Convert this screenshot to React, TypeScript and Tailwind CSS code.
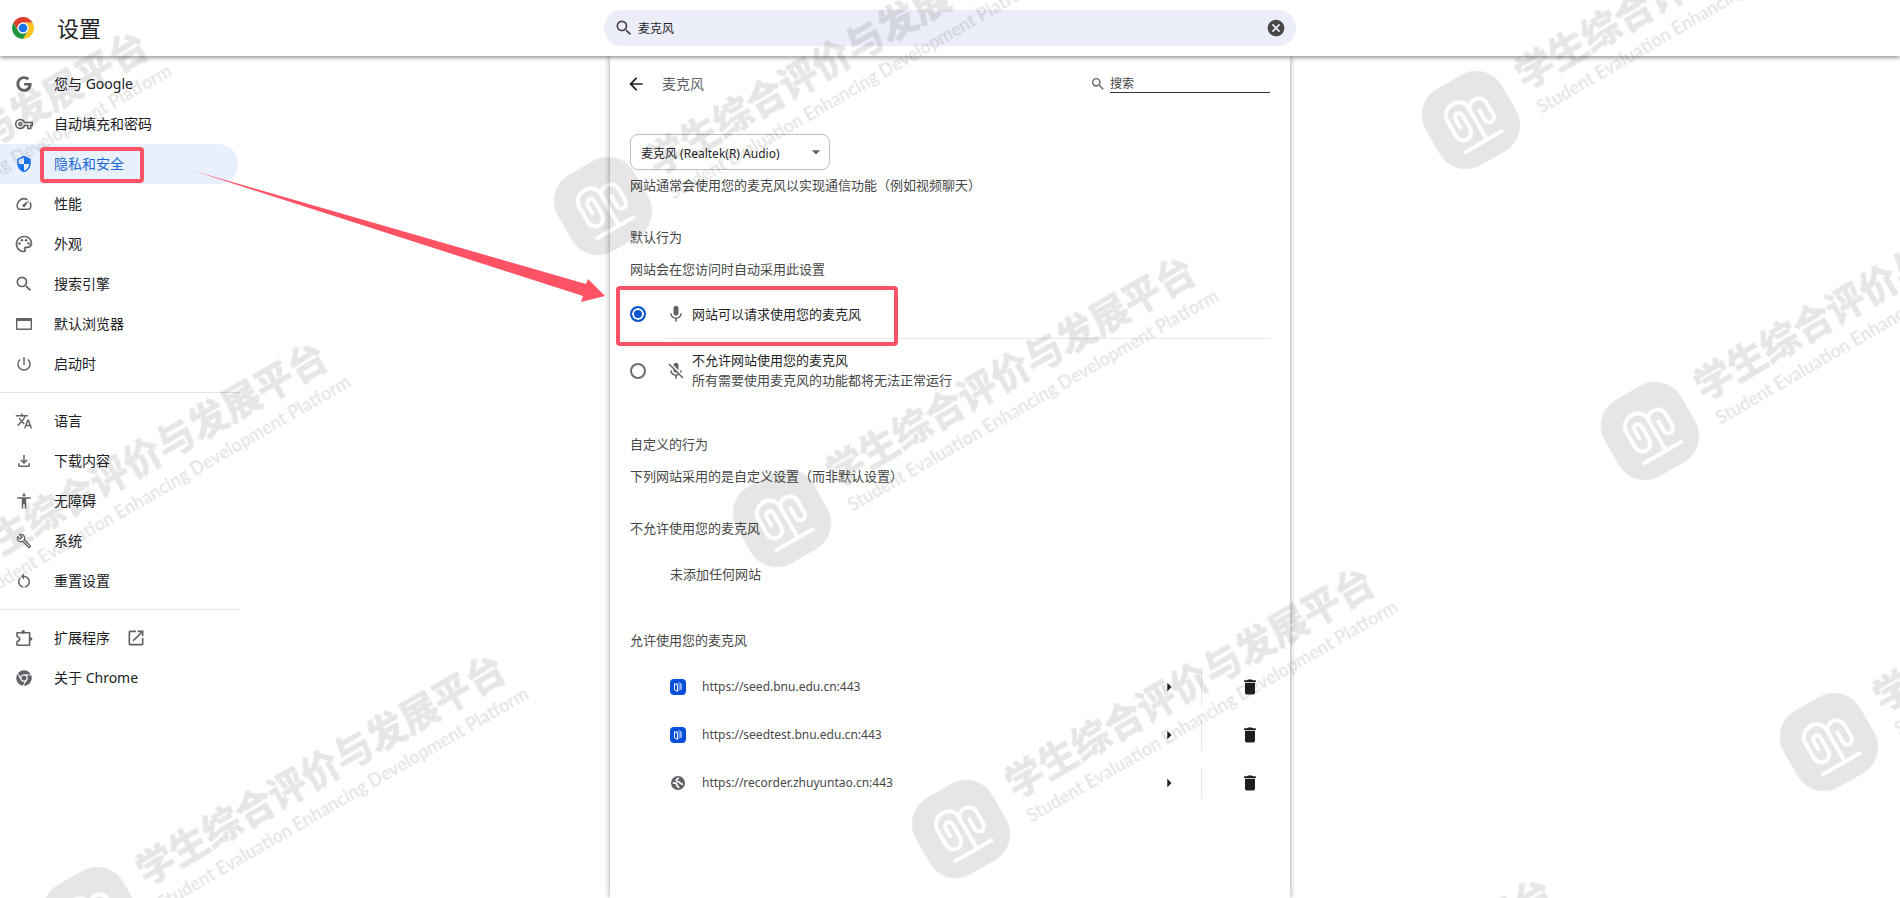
import { useState } from 'react';
import type { ReactNode } from 'react';
import { FaChrome, FaGoogle } from 'react-icons/fa';
import {
  MdAccessibility,
  MdArrowBack,
  MdArrowDropDown,
  MdArrowRight,
  MdCancel,
  MdDelete,
  MdMic,
  MdMicOff,
  MdOpenInNew,
  MdOutlineBuild,
  MdOutlineFileDownload,
  MdOutlinePalette,
  MdOutlineVpnKey,
  MdPowerSettingsNew,
  MdRestartAlt,
  MdSearch,
  MdSecurity,
  MdSpeed,
  MdTranslate,
} from 'react-icons/md';

interface NavItem {
  label: string;
  icon: ReactNode;
  active?: boolean;
  external?: boolean;
}

function PuzzleIcon() {
  return (
    <svg viewBox="0 0 17 17" className="size-[17px]" fill="none">
      <path
        d="M1 2.7h12.6v12.6H1v-3.8q2.6-.5 2.6-2.5T1 6.5z"
        stroke="currentColor"
        strokeWidth="1.6"
        strokeLinejoin="round"
      />
      <circle cx="7.2" cy="1.9" r="1.8" fill="currentColor" />
      <circle cx="14.6" cy="9" r="1.8" fill="currentColor" />
    </svg>
  );
}

function WindowIcon() {
  return (
    <svg viewBox="0 0 16 12" className="h-3 w-4" fill="currentColor">
      <path d="M1 0h14a1 1 0 0 1 1 1v10a1 1 0 0 1-1 1H1a1 1 0 0 1-1-1V1a1 1 0 0 1 1-1zM1.4 3v7.6h13.2V3z" fillRule="evenodd" />
    </svg>
  );
}

function GlobeIcon() {
  return (
    <svg viewBox="0 0 14 14" className="size-[14px]" fill="none">
      <circle cx="7" cy="7" r="7" fill="#5f6368" />
      <path
        d="M8 2.2C4.6 2.8 4.6 5.4 7 5.6S8.4 8.6 12 8.2M1.8 6.8C4.8 7 6.4 7.4 6 9.6L8.2 11.8"
        stroke="#fff"
        strokeWidth="1.7"
      />
    </svg>
  );
}

function ChromeLogo() {
  const blade = 'M4.95 13A22 22 0 0 1 43.05 13L24 13A11 11 0 0 0 14.47 29.5Z';
  return (
    <svg viewBox="2 2 44 44" className="size-[22px]">
      <path d={blade} fill="#fcc31e" transform="rotate(120 24 24)" />
      <path d={blade} fill="#229342" transform="rotate(240 24 24)" />
      <path d={blade} fill="#e33b2e" />
      <circle cx="24" cy="24" r="11" fill="#fff" />
      <circle cx="24" cy="24" r="8.7" fill="#1a73e8" />
    </svg>
  );
}

function SeedFavicon() {
  return (
    <svg viewBox="0 0 16 16" className="size-4" fill="none">
      <rect width="16" height="16" rx="4" fill="#0450dc" />
      <path d="M4.5 4.6v6.2l3 1.6V6.2z" stroke="#fff" strokeWidth="1" strokeLinejoin="round" />
      <path d="M6 4.2l3.2 1.6v6M8 3.4l2.4 1.4v6.4M9.8 3.8l1.8 1.4v5.4" stroke="#bcd2fa" strokeWidth="0.8" />
    </svg>
  );
}

const mainItems: NavItem[] = [
  { label: '您与 Google', icon: <FaGoogle size={16} /> },
  { label: '自动填充和密码', icon: <MdOutlineVpnKey size={18} /> },
  { label: '隐私和安全', icon: <MdSecurity size={18} />, active: true },
  { label: '性能', icon: <MdSpeed size={18} /> },
  { label: '外观', icon: <MdOutlinePalette size={20} /> },
  { label: '搜索引擎', icon: <MdSearch size={20} /> },
  { label: '默认浏览器', icon: <WindowIcon /> },
  { label: '启动时', icon: <MdPowerSettingsNew size={18} /> },
];

const advancedItems: NavItem[] = [
  { label: '语言', icon: <MdTranslate size={18} /> },
  { label: '下载内容', icon: <MdOutlineFileDownload size={18} /> },
  { label: '无障碍', icon: <MdAccessibility size={18} /> },
  { label: '系统', icon: <MdOutlineBuild size={16} /> },
  { label: '重置设置', icon: <MdRestartAlt size={18} /> },
];

const otherItems: NavItem[] = [
  { label: '扩展程序', icon: <PuzzleIcon />, external: true },
  { label: '关于 Chrome', icon: <FaChrome size={16} /> },
];

const sites = [
  { url: 'https://seed.bnu.edu.cn:443', icon: <SeedFavicon /> },
  { url: 'https://seedtest.bnu.edu.cn:443', icon: <SeedFavicon /> },
  { url: 'https://recorder.zhuyuntao.cn:443', icon: <GlobeIcon /> },
];

function NavGroup({ items }: { items: NavItem[] }) {
  return (
    <ul className="py-2">
      {items.map((item) => (
        <li key={item.label}>
          <a
            href="#"
            className={`relative flex h-10 items-center mr-[2px] text-sm ${
              item.active ? 'rounded-r-full bg-[#e8f0fe] text-[#1967d2]' : 'text-[#202124]'
            }`}
          >
            <span
              className={`flex w-12 justify-center ${item.active ? 'text-[#1a73e8]' : 'text-[#5f6368]'}`}
            >
              {item.icon}
            </span>
            <span className="ml-[6px]">{item.label}</span>
            {item.external && <MdOpenInNew size={20} className="ml-4 text-[#5f6368]" />}
            {item.active && (
              <span className="absolute left-10 top-[3px] h-9 w-26 rounded-sm border-4 border-[#ff5365]" />
            )}
          </a>
        </li>
      ))}
    </ul>
  );
}

/* Repeated diagonal brand watermark */
const marks = [
  [-265, 293],
  [-86, 604],
  [92, 916],
  [603, 206],
  [782, 518],
  [961, 829],
  [1140, 1140],
  [1471, 120],
  [1650, 431],
  [1829, 742],
];

function Watermark() {
  return (
    <svg className="pointer-events-none absolute inset-0 z-20 h-full w-full" aria-hidden="true">
      <defs>
        <mask id="brand-cut" maskUnits="userSpaceOnUse" x="-50" y="-50" width="100" height="100">
          <rect x="-50" y="-50" width="100" height="100" fill="#fff" />
          <g fill="none" stroke="#000" strokeWidth="4" strokeLinecap="round" strokeLinejoin="round">
            <path d="M4 24V-12C4-18-1-23-8-23C-15-23-21-18-21-11V6C-21 18-5 18-5 6V-8C-5-14-13-14-13-8V1" />
            <path d="M4-9C5-14 9-16 13-16C18-16 22-12 22-7V6C22 14 12 14 12 6V-4" />
            <path d="M-21 25H21" />
          </g>
        </mask>
      </defs>
      {marks.map(([x, y]) => (
        <g key={`${x},${y}`} transform={`translate(${x} ${y}) rotate(-30)`} opacity="0.1">
          <rect x="-44" y="-44" width="88" height="88" rx="30" mask="url(#brand-cut)" />
          <text x="62" y="1" stroke="#000" strokeWidth="1" className="text-[38px] font-bold">
            学生综合评价与发展平台
          </text>
          <text x="64" y="30" className="font-[Lato] text-[18px] font-bold">
            Student Evaluation Enhancing Development Platform
          </text>
        </g>
      ))}
    </svg>
  );
}

export default function App() {
  const [query, setQuery] = useState('麦克风');
  const [mode, setMode] = useState('ask');

  const radioClass =
    'size-4 shrink-0 appearance-none rounded-full border-2 border-[#6e6e6e] checked:border-[#0b57d0] checked:bg-[#0b57d0] checked:shadow-[inset_0_0_0_2px_#fff]';

  return (
    <div className="relative flex min-h-screen flex-col overflow-hidden bg-white font-['Noto_Sans','Noto_Sans_CJK_SC',sans-serif] text-[#474747]">
      {/* Top bar */}
      <header className="relative z-10 grid h-14 grid-cols-[1fr_692px_1fr] items-center bg-white shadow-[0_2px_4px_rgba(0,0,0,0.4)]">
        <div className="flex items-center pl-3">
          <ChromeLogo />
          <h1 className="ml-[23px] text-[22px] text-[#202124]">设置</h1>
        </div>
        <label className="flex h-9 items-center rounded-full bg-[#ebeef8] px-[10px]">
          <MdSearch size={20} className="text-[#474747]" />
          <input
            aria-label="在设置中搜索"
            value={query}
            onChange={(e) => setQuery(e.target.value)}
            className="ml-1 flex-1 bg-transparent pt-px text-xs text-[#1f1f1f] outline-none"
          />
          <button type="button" aria-label="清除" onClick={() => setQuery('')}>
            <MdCancel size={20} className="text-[#474747]" />
          </button>
        </label>
      </header>

      <div className="grid flex-1 grid-cols-[1fr_680px_1fr]">
        {/* Sidebar */}
        <nav className="w-60 divide-y divide-[#e4e4e4]">
          <NavGroup items={mainItems} />
          <NavGroup items={advancedItems} />
          <NavGroup items={otherItems} />
        </nav>

        {/* Microphone settings */}
        <main className="bg-white px-5 text-[13px] leading-5 shadow-[0_0_6px_rgba(0,0,0,0.4)]">
          <div className="flex h-14 items-center">
            <button type="button" aria-label="返回" className="-ml-1 text-[#1f1f1f]">
              <MdArrowBack size={20} />
            </button>
            <h2 className="ml-4 flex-1 text-sm text-[#5f6368]">麦克风</h2>
            <label className="flex items-center">
              <MdSearch size={16} className="mr-1 text-[#5f6368]" />
              <input
                aria-label="搜索"
                placeholder="搜索"
                className="h-[18px] w-40 border-b border-[#333] text-xs outline-none placeholder:text-[#474747]"
              />
            </label>
          </div>

          <div className="relative mt-[22px] w-50">
            <select
              aria-label="麦克风设备"
              className="h-9 w-full appearance-none rounded-lg border border-[#bdbdbd] bg-transparent pl-[10px] pt-[3px] text-xs text-[#1f1f1f]"
            >
              <option>麦克风 (Realtek(R) Audio)</option>
            </select>
            <MdArrowDropDown size={20} className="pointer-events-none absolute right-1 top-2 text-[#5f6368]" />
          </div>
          <p className="mt-[5px]">网站通常会使用您的麦克风以实现通信功能（例如视频聊天）</p>

          <h3 className="mt-8">默认行为</h3>
          <p className="mt-3">网站会在您访问时自动采用此设置</p>

          <label className="relative mt-[11px] flex h-12 items-center text-[#1f1f1f]">
            <input
              type="radio"
              name="mode"
              checked={mode === 'ask'}
              onChange={() => setMode('ask')}
              className={radioClass}
            />
            <MdMic size={20} className="ml-5 text-[#5f6368]" />
            <span className="ml-[6px]">网站可以请求使用您的麦克风</span>
            <span className="absolute -left-[14px] -top-1 h-15 w-[282px] rounded-sm border-4 border-[#ff5365]" />
          </label>
          <hr className="ml-9 border-[#e8e8e8]" />
          <label className="flex h-16 items-center">
            <input
              type="radio"
              name="mode"
              checked={mode === 'block'}
              onChange={() => setMode('block')}
              className={radioClass}
            />
            <MdMicOff size={20} className="ml-5 text-[#5f6368]" />
            <span className="ml-[6px] pb-[2px]">
              <span className="block text-[#1f1f1f]">不允许网站使用您的麦克风</span>
              <span className="block">所有需要使用麦克风的功能都将无法正常运行</span>
            </span>
          </label>

          <h3 className="mt-[31px]">自定义的行为</h3>
          <p className="mt-3">下列网站采用的是自定义设置（而非默认设置）</p>

          <h3 className="mt-8">不允许使用您的麦克风</h3>
          <p className="ml-10 mt-[26px]">未添加任何网站</p>

          <h3 className="mt-[46px]">允许使用您的麦克风</h3>
          <ul className="mt-[13px] pl-10 text-xs">
            {sites.map((site) => (
              <li key={site.url} className="flex h-12 items-center">
                <span className="flex w-4 justify-center">{site.icon}</span>
                <span className="ml-4 flex-1">{site.url}</span>
                <button type="button" aria-label={`${site.url} 详情`} className="text-[#1f1f1f]">
                  <MdArrowRight size={20} />
                </button>
                <span className="ml-[22px] h-8 w-px bg-[#e8e8e8]" />
                <button type="button" aria-label={`移除 ${site.url}`} className="ml-[38px] mr-[10px] text-[#1f1f1f]">
                  <MdDelete size={20} />
                </button>
              </li>
            ))}
          </ul>
        </main>
      </div>

      <Watermark />

      {/* Pointer from the sidebar entry to the permission option */}
      <svg className="pointer-events-none absolute left-0 top-0 z-30" width="610" height="310" aria-hidden="true">
        <path d="M194 171L586 284L588 279L605 296L581 302L583 296Z" fill="#ff5365" />
      </svg>
    </div>
  );
}
